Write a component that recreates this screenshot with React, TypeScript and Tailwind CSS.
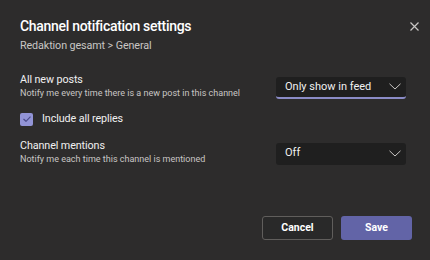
const font = { fontFamily: 'Roboto, "Liberation Sans", sans-serif' }

function Chevron() {
  return (
    <svg width="12" height="7" viewBox="0 0 12 7" fill="none" className="text-[#c8c6c4]">
      <polyline points="0.5,0.8 6,6 11.5,0.8" stroke="currentColor" strokeWidth="1" />
    </svg>
  )
}

function Select({ value, active }: { value: string; active?: boolean }) {
  return (
    <div
      className={`flex h-[22px] w-[130px] items-center justify-between rounded-[3px] bg-[#1f1f1f] pl-[9px] pr-[5px] text-[11px] text-[#f0f0f0] ${
        active ? "border-b-2 border-[#8b8cc7]" : ""
      }`}
    >
      <span className={active ? "mt-[1px]" : ""}>{value}</span>
      <Chevron />
    </div>
  )
}

function Row({
  label,
  hint,
  value,
  active,
}: {
  label: string
  hint: string
  value: string
  active?: boolean
}) {
  return (
    <div className="flex items-center justify-between">
      <div className="flex flex-col">
        <span className="text-[10.75px] leading-[15px] tracking-[-0.1px] text-[#f0f0f0]">{label}</span>
        <span className="text-[9px] leading-[13px] text-[#c8c6c4]">{hint}</span>
      </div>
      <div className="mt-[3px]">
        <Select value={value} active={active} />
      </div>
    </div>
  )
}

export default function App() {
  return (
    <div className="h-[260px] w-[430px] bg-[#2d2c2c]" style={font}>
      <div className="flex flex-col pl-[20px] pr-[24px] pt-[16px]">
        <div className="flex h-[20px] items-center justify-between">
          <h1 className="text-[14px] font-medium leading-[20px] tracking-[-0.3px] text-white">
            Channel notification settings
          </h1>
          <svg width="9" height="9" viewBox="0 0 9 9" className="-mr-[13px] text-[#c8c6c4]">
            <path d="M0.5 0.5 L8.5 8.5 M8.5 0.5 L0.5 8.5" stroke="currentColor" strokeWidth="1.2" />
          </svg>
        </div>
        <p className="mt-[2px] text-[10.75px] leading-[16px] tracking-[-0.1px] text-[#c8c6c4]">
          Redaktion gesamt &gt; General
        </p>

        <div className="mt-[18px]">
          <Row
            label="All new posts"
            hint="Notify me every time there is a new post in this channel"
            value="Only show in feed"
            active
          />
        </div>

        <div className="mt-[11px] flex h-[16px] items-center gap-[9px]">
          <div className="flex h-[13px] w-[13px] items-center justify-center rounded-[2px] bg-[#9294d6]">
            <svg width="8" height="6" viewBox="0 0 8 6" fill="none">
              <polyline points="0.5,3 3,5.3 7.5,0.7" stroke="#4b4c8a" strokeWidth="1.2" />
            </svg>
          </div>
          <span className="text-[10.75px] leading-[16px] tracking-[-0.1px] text-[#f0f0f0]">
            Include all replies
          </span>
        </div>

        <div className="mt-[11px]">
          <Row
            label="Channel mentions"
            hint="Notify me each time this channel is mentioned"
            value="Off"
          />
        </div>

        <div className="mt-[50px] -mr-[6px] flex justify-end gap-[8px]">
          <button className="h-[24px] w-[71px] rounded-[3px] border border-[#605e5c] bg-[#292929] text-[10.5px] font-bold text-white">
            Cancel
          </button>
          <button className="h-[24px] w-[71px] rounded-[3px] bg-[#6264a7] text-[10.5px] font-bold text-white">
            Save
          </button>
        </div>
      </div>
    </div>
  )
}
